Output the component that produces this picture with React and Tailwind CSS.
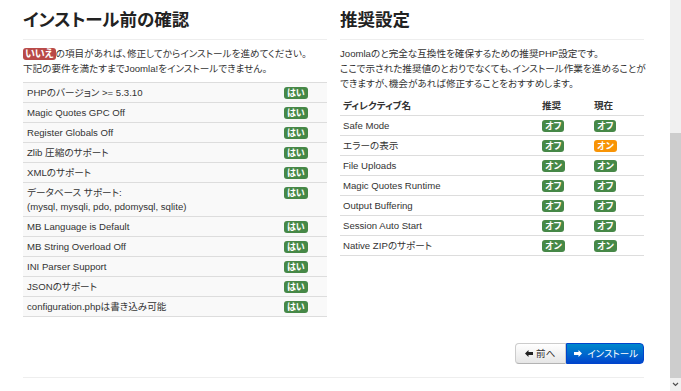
import React from 'react';

const checks = [
  { label: 'PHPのバージョン >= 5.3.10' },
  { label: 'Magic Quotes GPC Off' },
  { label: 'Register Globals Off' },
  { label: 'Zlib 圧縮のサポート' },
  { label: 'XMLのサポート' },
  { label: 'データベース サポート:', sub: '(mysql, mysqli, pdo, pdomysql, sqlite)' },
  { label: 'MB Language is Default' },
  { label: 'MB String Overload Off' },
  { label: 'INI Parser Support' },
  { label: 'JSONのサポート' },
  { label: 'configuration.phpは書き込み可能' },
];

const settings = [
  { name: 'Safe Mode', rec: 'オフ', cur: 'オフ' },
  { name: 'エラーの表示', rec: 'オフ', cur: 'オン', warn: true },
  { name: 'File Uploads', rec: 'オン', cur: 'オン' },
  { name: 'Magic Quotes Runtime', rec: 'オフ', cur: 'オフ' },
  { name: 'Output Buffering', rec: 'オフ', cur: 'オフ' },
  { name: 'Session Auto Start', rec: 'オフ', cur: 'オフ' },
  { name: 'Native ZIPのサポート', rec: 'オン', cur: 'オン' },
];

function Badge({ children, color = 'bg-[#468847]' }) {
  return (
    <span className={`inline-block ${color} text-white font-bold text-[9px] leading-[12px] px-[3px] rounded-[3px] mt-[2px]`}>
      {children}
    </span>
  );
}

function ArrowLeft({ fill }) {
  return (
    <svg width="8" height="7" viewBox="0 0 8 7" className="inline-block">
      <path d="M0 3.5 L3.5 0 L3.5 2 L8 2 L8 5 L3.5 5 L3.5 7 Z" fill={fill} />
    </svg>
  );
}

function ArrowRight({ fill }) {
  return (
    <svg width="8" height="7" viewBox="0 0 8 7" className="inline-block">
      <path d="M8 3.5 L4.5 0 L4.5 2 L0 2 L0 5 L4.5 5 L4.5 7 Z" fill={fill} />
    </svg>
  );
}

export default function App() {
  return (
    <div className="flex h-[391px] w-[681px] overflow-hidden bg-white text-[#333] text-[9.6px] font-['Liberation_Sans','Noto_Sans_CJK_JP',sans-serif] [font-feature-settings:'palt']">
      <div className="w-[670px] pl-[23px] pr-[26px]">
        <div className="flex gap-[13px]">
          {/* left column */}
          <section className="w-[304px]">
            <h3 className="mt-[10px] h-[20px] text-[17.5px] leading-[20px] font-bold text-[#222]">
              インストール前の確認
            </h3>
            <hr className="mt-[9px] border-[#eee]" />
            <p className="mt-[6px] leading-[15px] whitespace-nowrap">
              <span className="inline-block bg-[#b94a48] text-white font-bold text-[10px] leading-[12px] px-[2px] rounded-[3px]">いいえ</span>
              の項目があれば、修正してからインストールを進めてください。
              <br />
              下記の要件を満たすまでJoomla!をインストールできません。
            </p>
            <div className="mt-[6px] border-b border-[#ddd]">
              {checks.map(c => (
                <div key={c.label} className="flex border-t border-[#ddd] bg-[#f9f9f9]">
                  <div className="flex-1 pl-[4px] pt-[3px] pb-[2px] leading-[14px]">
                    {c.label}
                    {c.sub && <><br />{c.sub}</>}
                  </div>
                  <div className="w-[43px] pt-[2px]">
                    <Badge>はい</Badge>
                  </div>
                </div>
              ))}
            </div>
          </section>

          {/* right column */}
          <section className="w-[304px]">
            <h3 className="mt-[10px] h-[20px] text-[17.5px] leading-[20px] font-bold text-[#222]">
              推奨設定
            </h3>
            <hr className="mt-[9px] border-[#eee]" />
            <p className="mt-[6px] leading-[15px] whitespace-nowrap">
              Joomlaのと完全な互換性を確保するための推奨PHP設定です。
              <br />
              ここで示された推奨値のとおりでなくても、インストール作業を進めることが
              <br />
              できますが、機会があれば修正することをおすすめします。
            </p>
            <div className="mt-[5px] border-b border-[#ddd]">
              <div className="flex font-bold leading-[14px] pt-[3px] pb-[2px]">
                <div className="flex-1 pl-[3px]">ディレクティブ名</div>
                <div className="w-[52px]">推奨</div>
                <div className="w-[50px]">現在</div>
              </div>
              {settings.map(s => (
                <div key={s.name} className="flex border-t border-[#ddd]">
                  <div className="flex-1 pl-[3px] pt-[3px] pb-[2px] leading-[14px]">{s.name}</div>
                  <div className="w-[52px] pt-[2px]">
                    <Badge>{s.rec}</Badge>
                  </div>
                  <div className="w-[50px] pt-[2px]">
                    <Badge color={s.warn ? 'bg-[#f89406]' : 'bg-[#468847]'}>{s.cur}</Badge>
                  </div>
                </div>
              ))}
            </div>
          </section>
        </div>

        {/* buttons */}
        <div className="mt-[26px] flex justify-end">
          <div className="flex h-[21px] text-[9.5px] leading-[15px]">
            <button className="flex items-center gap-[3px] pl-[9px] pr-[10px] rounded-l-[4px] border border-[#ccc] border-b-[#b3b3b3] bg-gradient-to-b from-white to-[#e6e6e6] text-[#333]">
              <ArrowLeft fill="#222" />
              前へ
            </button>
            <button className="flex items-center gap-[5px] pl-[7px] pr-[5px] rounded-r-[4px] border border-[#04c] bg-gradient-to-b from-[#08c] to-[#04c] text-white">
              <ArrowRight fill="#fff" />
              インストール
            </button>
          </div>
        </div>
        <hr className="mt-[13px] border-[#eee]" />
      </div>

      {/* scrollbar */}
      <div className="flex w-[11px] flex-col bg-[#f0f0f0]">
        <div className="h-[133px]" />
        <div className="h-[245px] bg-[#cdcdcd]" />
        <div className="flex flex-1 items-center justify-center">
          <svg width="7" height="5" viewBox="0 0 7 5">
            <path d="M1 1 L3.5 3.5 L6 1" stroke="#505050" strokeWidth="1.2" fill="none" />
          </svg>
        </div>
      </div>
    </div>
  );
}
